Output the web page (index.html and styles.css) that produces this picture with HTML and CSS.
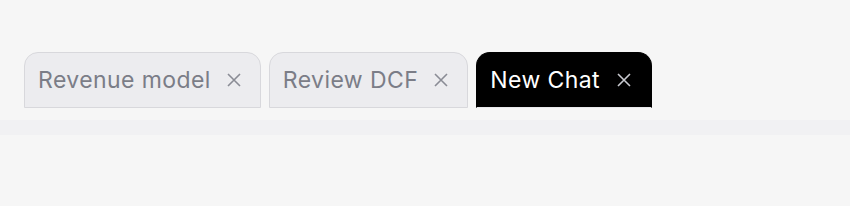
FILE: index.html
```html
<!DOCTYPE html>
<html>
<head>
<meta charset="utf-8">
<link rel="stylesheet" href="styles.css">
</head>
<body>
<div class="tabs">
  <div class="tab">
    <span class="label">Revenue model</span>
    <svg class="close" viewBox="0 0 16 16" width="16" height="16"><path d="M2 2L14 14M14 2L2 14" /></svg>
  </div>
  <div class="tab">
    <span class="label">Review DCF</span>
    <svg class="close" viewBox="0 0 16 16" width="16" height="16"><path d="M2 2L14 14M14 2L2 14" /></svg>
  </div>
  <div class="tab active">
    <span class="label">New Chat</span>
    <svg class="close" viewBox="0 0 16 16" width="16" height="16"><path d="M2 2L14 14M14 2L2 14" /></svg>
  </div>
</div>
<div class="strip"></div>
</body>
</html>
```
FILE: styles.css
```css
html, body {
  margin: 0;
  background: #f6f6f6;
}
body {
  padding-top: 52px;
  font-family: Inter, "Noto Sans", sans-serif;
}
.tabs {
  display: flex;
  gap: 8px;
  padding-left: 24px;
}
.tab {
  box-sizing: border-box;
  height: 56px;
  display: flex;
  align-items: center;
  gap: 15px;
  padding: 1px 18px 1px 13px;
  background: #ececef;
  border: 1.5px solid #d8d8dc;
  border-radius: 14px 14px 0 0;
  color: #7b7d87;
  font-size: 23px;
  letter-spacing: 0.42px;
}
.tab.active {
  background: #000;
  border-color: #000;
  border-bottom-color: #e9e9ec;
  color: #fff;
  gap: 16px;
  padding-right: 19px;
}
.close {
  flex: none;
  fill: none;
  stroke: #8a8c95;
  stroke-width: 1.6;
}
.active .close {
  stroke: #c9cad0;
}
.strip {
  margin-top: 12px;
  height: 15px;
  background: #f1f1f3;
}
```
